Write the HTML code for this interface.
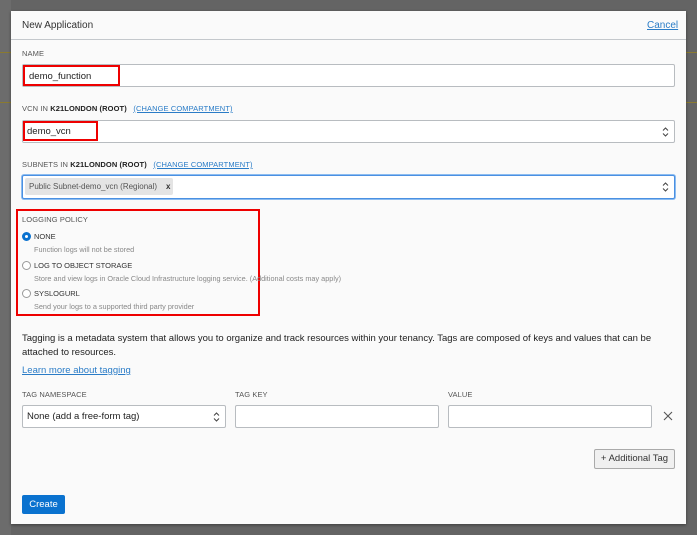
<!DOCTYPE html>
<html><head><style>
*{margin:0;padding:0;box-sizing:border-box}
body{width:697px;height:535px;background:#646464;font-family:"Liberation Sans",Arial,sans-serif;position:relative;overflow:hidden;color:#333}
.a{position:absolute}
.m{left:11px;top:11px;width:675px;height:513px;background:#fafafa;box-shadow:0 1px 3px rgba(0,0,0,.4)}
.lbl{font-size:7.5px;color:#555;text-transform:uppercase;letter-spacing:.1px}
.lbl b{color:#222}
.lnk{color:#2a7cc7;text-decoration:underline}
.inp{background:#fff;border:1px solid #b8bcc0;border-radius:2px}
.red{border:2px solid #e00}
.arr{position:absolute;right:5px;top:5px;width:7px;height:12px}
.rad{width:9px;height:9px;border:1px solid #999;border-radius:50%;background:#fff}
.opt{font-size:7.5px;color:#333}
.desc{font-size:7.3px;color:#888}
</style></head><body>
<div class="a" style="left:0;top:0;width:11px;height:535px;background:#6c6c6c"></div>
<div class="a" style="left:0;top:52px;width:11px;height:1px;background:#8a7a30"></div>
<div class="a" style="left:0;top:102px;width:11px;height:1px;background:#8a7a30"></div>
<div class="a" style="left:686px;top:52px;width:11px;height:1px;background:#8a7a30"></div>
<div class="a" style="left:686px;top:102px;width:11px;height:1px;background:#8a7a30"></div>
<div class="a m"></div>
<div class="a" style="left:22px;top:20px;font-size:10px;color:#333">New Application</div>
<div class="a lnk" style="left:647px;top:20px;font-size:10px">Cancel</div>
<div class="a" style="left:11px;top:39px;width:675px;height:1px;background:#c4c8cc"></div>

<div class="a lbl" style="left:22px;top:49px">Name</div>
<div class="a inp" style="left:22px;top:64px;width:653px;height:23px"></div>
<div class="a red" style="left:23px;top:65px;width:97px;height:21px"></div>
<div class="a" style="left:29px;top:71px;font-size:9.5px;color:#222">demo_function</div>

<div class="a lbl" style="left:22px;top:104px">VCN in <b>K21LONDON (ROOT)</b> &nbsp;&nbsp;<span class="lnk">(CHANGE COMPARTMENT)</span></div>
<div class="a inp" style="left:22px;top:120px;width:653px;height:23px"><svg class="arr" viewBox="0 0 7 12"><path d="M1 4.5L3.5 2 6 4.5M1 7.5L3.5 10 6 7.5" fill="none" stroke="#444" stroke-width="1"/></svg></div>
<div class="a red" style="left:23px;top:121px;width:75px;height:20px"></div>
<div class="a" style="left:27px;top:126px;font-size:9.5px;color:#222">demo_vcn</div>

<div class="a lbl" style="left:22px;top:160px">Subnets in <b>K21LONDON (ROOT)</b> &nbsp;&nbsp;<span class="lnk">(CHANGE COMPARTMENT)</span></div>
<div class="a inp" style="left:22px;top:175px;width:653px;height:24px;border:1px solid #4a90e2;box-shadow:0 0 0 1px #8cbcf0"><svg class="arr" viewBox="0 0 7 12"><path d="M1 4.5L3.5 2 6 4.5M1 7.5L3.5 10 6 7.5" fill="none" stroke="#444" stroke-width="1"/></svg></div>
<div class="a" style="left:25px;top:178px;width:148px;height:17px;background:#e4e4e4;border-radius:2px;font-size:8px;color:#555;padding:4px 0 0 4px">Public Subnet-demo_vcn (Regional) &nbsp;&nbsp; <b style="color:#333">x</b></div>

<div class="a red" style="left:16px;top:209px;width:244px;height:107px"></div>
<div class="a lbl" style="left:22px;top:215px">Logging Policy</div>
<div class="a rad" style="left:22px;top:232px;border:3px solid #0a72cf"></div>
<div class="a opt" style="left:34px;top:232px">NONE</div>
<div class="a desc" style="left:34px;top:245px">Function logs will not be stored</div>
<div class="a rad" style="left:22px;top:261px"></div>
<div class="a opt" style="left:34px;top:261px">LOG TO OBJECT STORAGE</div>
<div class="a desc" style="left:34px;top:274px">Store and view logs in Oracle Cloud Infrastructure logging service. (Additional costs may apply)</div>
<div class="a rad" style="left:22px;top:289px"></div>
<div class="a opt" style="left:34px;top:289px">SYSLOGURL</div>
<div class="a desc" style="left:34px;top:302px">Send your logs to a supported third party provider</div>

<div class="a" style="left:22px;top:332px;width:650px;font-size:9.5px;line-height:14px;color:#222">Tagging is a metadata system that allows you to organize and track resources within your tenancy. Tags are composed of keys and values that can be attached to resources.</div>
<div class="a lnk" style="left:22px;top:365px;font-size:9.5px">Learn more about tagging</div>

<div class="a lbl" style="left:22px;top:390px">Tag Namespace</div>
<div class="a lbl" style="left:235px;top:390px">Tag Key</div>
<div class="a lbl" style="left:448px;top:390px">Value</div>
<div class="a inp" style="left:22px;top:405px;width:204px;height:23px"><svg class="arr" viewBox="0 0 7 12"><path d="M1 4.5L3.5 2 6 4.5M1 7.5L3.5 10 6 7.5" fill="none" stroke="#444" stroke-width="1"/></svg></div>
<div class="a" style="left:27px;top:411px;font-size:9.5px;color:#222">None (add a free-form tag)</div>
<div class="a inp" style="left:235px;top:405px;width:204px;height:23px"></div>
<div class="a inp" style="left:448px;top:405px;width:204px;height:23px"></div>
<svg class="a" style="left:663px;top:411px" width="10" height="10" viewBox="0 0 10 10"><path d="M1 1L9 9M9 1L1 9" stroke="#555" stroke-width="1.1"/></svg>
<div class="a" style="left:594px;top:449px;width:81px;height:20px;background:#f0f0f0;border:1px solid #aaa;border-radius:2px;font-size:9.5px;color:#333;text-align:center;line-height:18px">+ Additional Tag</div>
<div class="a" style="left:22px;top:495px;width:43px;height:19px;background:#0a72cf;border-radius:2px;color:#fff;font-size:9.5px;text-align:center;line-height:19px">Create</div>
</body></html>
